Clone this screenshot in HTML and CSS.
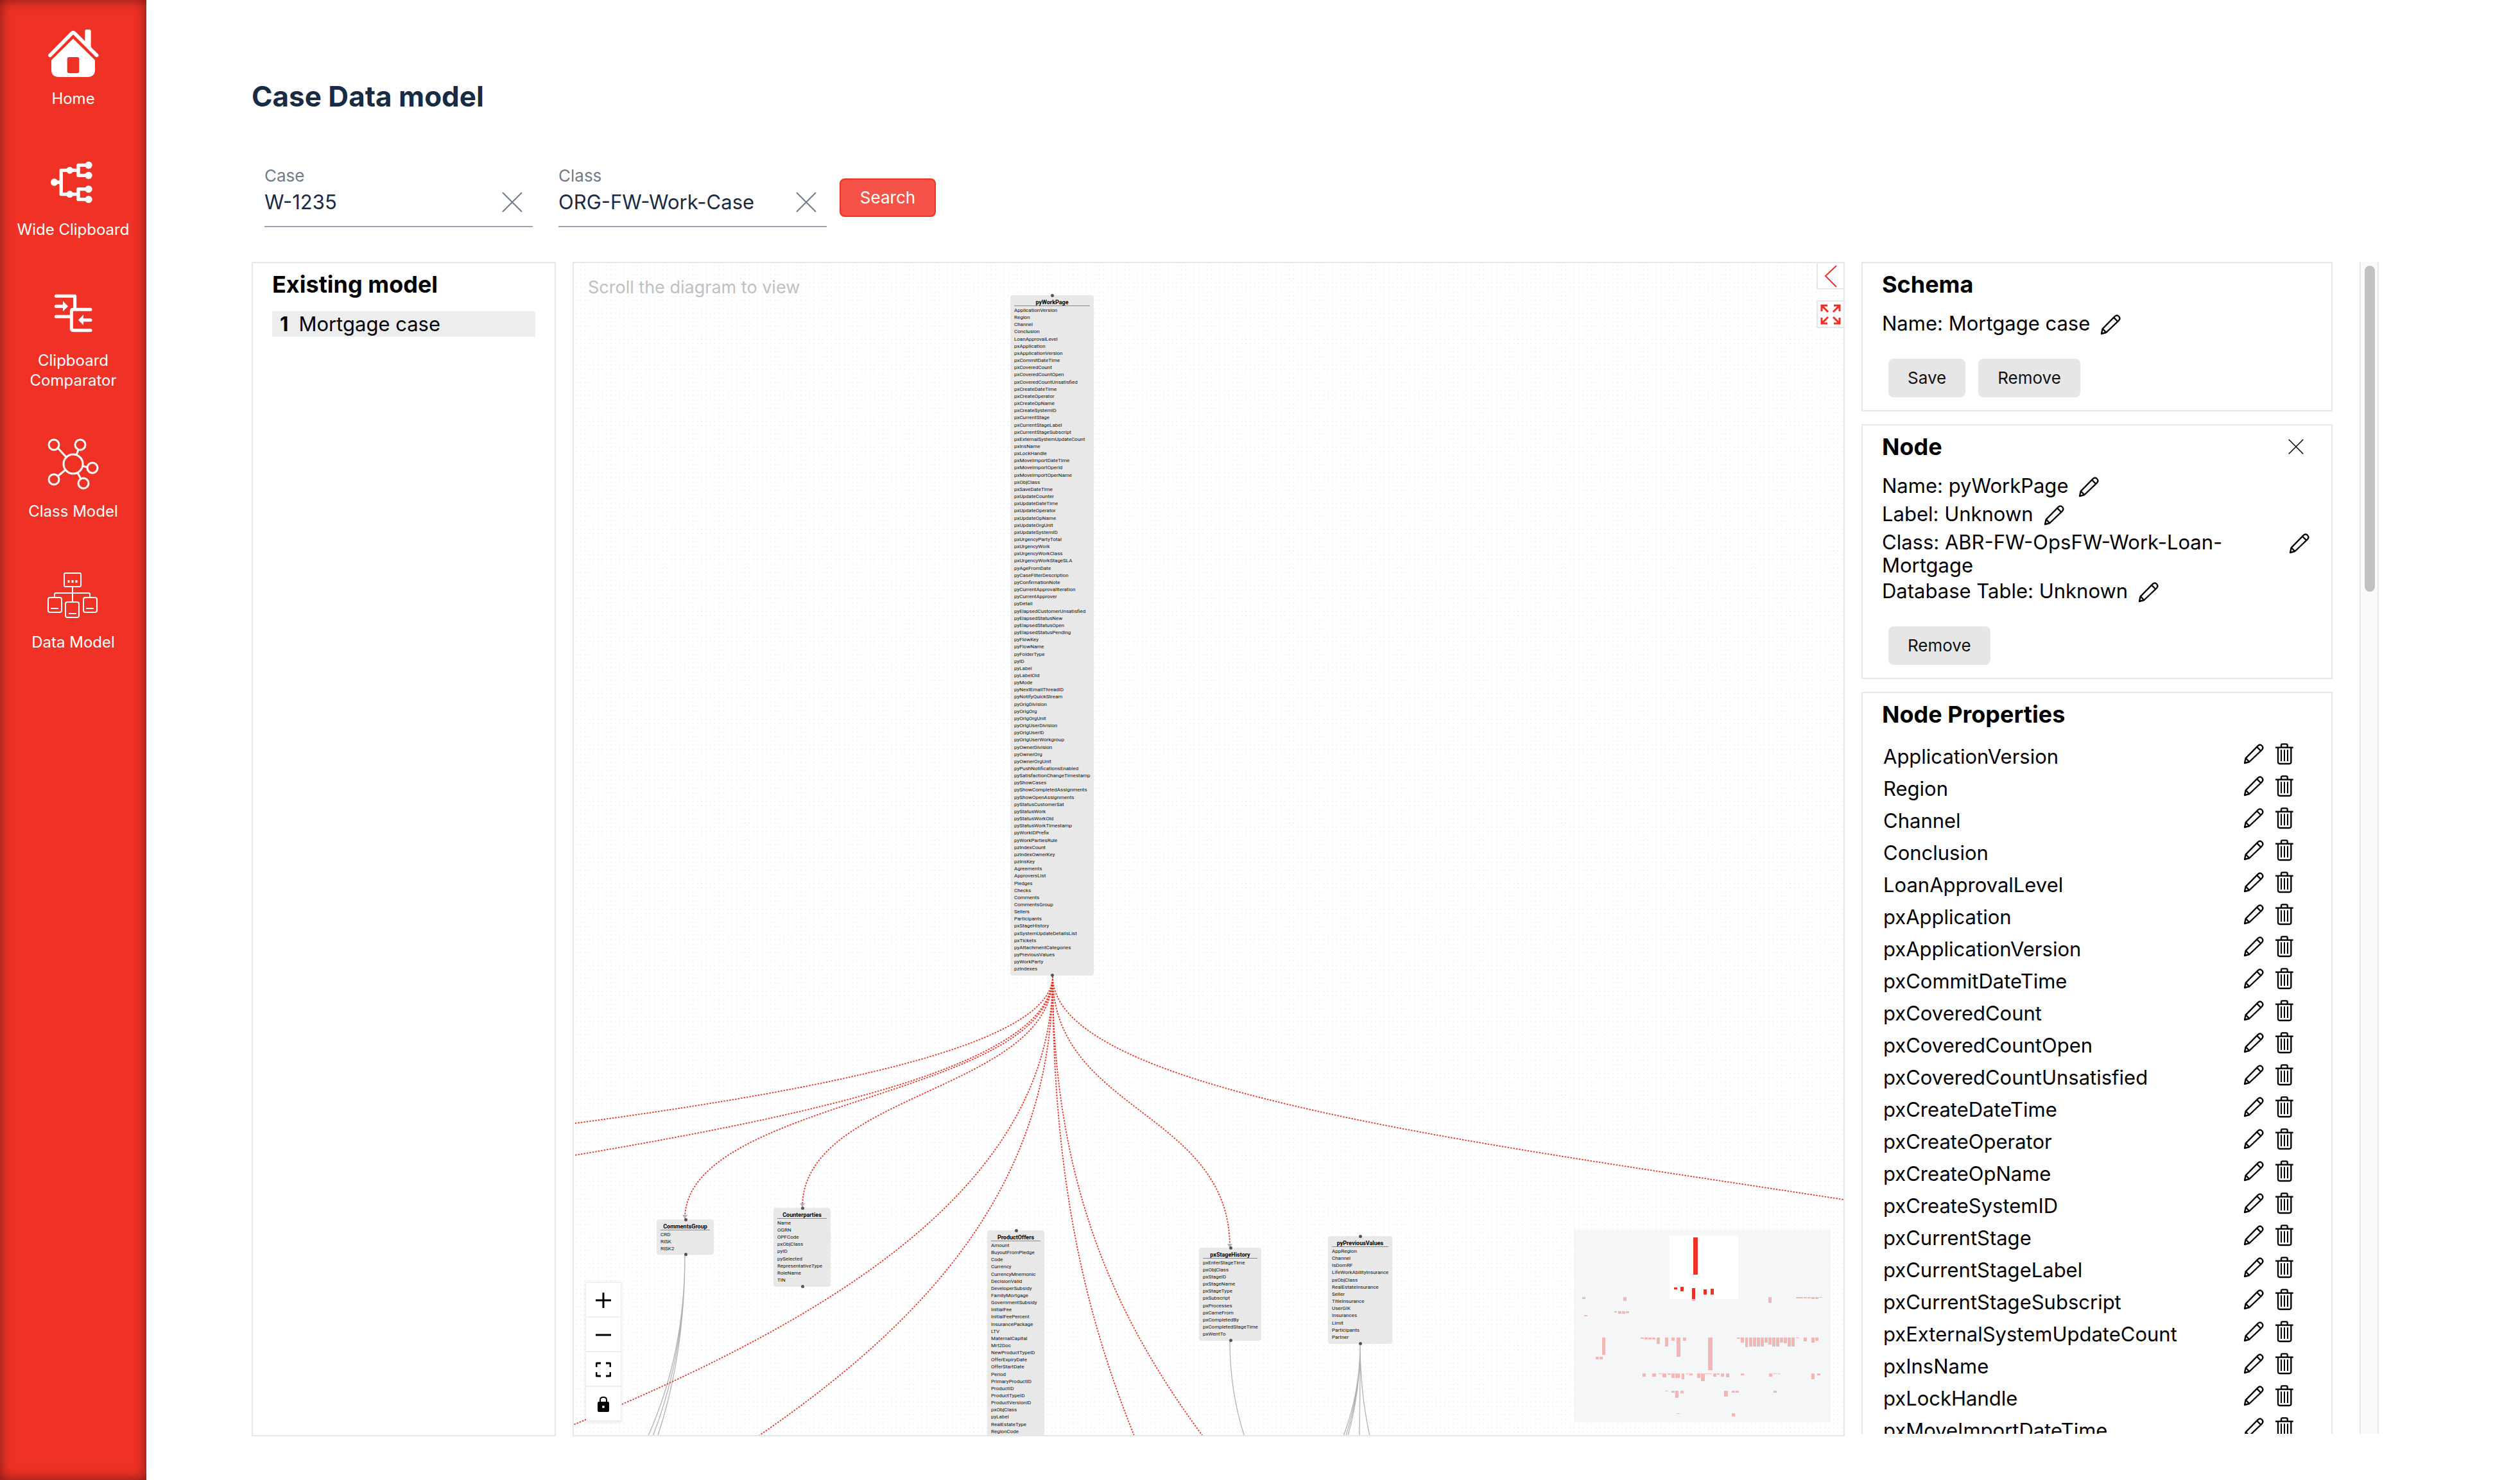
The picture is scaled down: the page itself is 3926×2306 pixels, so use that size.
FILE: index.html
```html
<!DOCTYPE html>
<html lang="en">
<head>
<meta charset="utf-8">
<title>Case Data model</title>
<link rel="stylesheet" href="styles.css">
</head>
<body>
<svg class="sprite" aria-hidden="true">
  <symbol id="pencil" viewBox="42 54 96 96"><g fill="none" stroke="#000" stroke-width="7" stroke-linejoin="round"><path d="M48 144 53 121 109 64Q120 54 129 63 138 73 128 83L70 138Z"/><path d="M105 68 124 87M54 122 70 138"/></g></symbol>
  <symbol id="trash" viewBox="189 48 96 102"><g fill="none" stroke="#000" stroke-width="7"><path d="M195 68H278"/><path d="M222 68V58Q222 52 228 52H245Q251 52 251 58V68"/><path d="M207 68V136Q207 144 215 144H260Q268 144 268 136V68"/><path d="M222 79V132M237 79V132M252 79V132" stroke-width="6"/></g></symbol>
  <symbol id="cross" viewBox="0 0 32 32"><path d="M1 1 31 31M31 1 1 31" fill="none" stroke="currentColor" stroke-width="2"/></symbol>
</svg>
<div class="app">
  <nav class="sidebar">
    <a class="nav-item" href="#"><svg class="nav-icon" viewBox="72 30 240 240"><path d="M192 91 294 191V240Q292 268 264 270H120Q92 268 90 240V191ZM172 177Q164 177 164 186V243Q164 252 173 252H211Q220 252 220 243V186Q220 177 211 177Z" fill="#fff" fill-rule="evenodd"/><path d="M84 169 186 65Q192 59 198 65L302 169" fill="none" stroke="#fff" stroke-width="17" stroke-linecap="round"/><path d="M247 104V56Q247 48 255 48H267Q275 48 275 56V134Z" fill="#fff"/></svg><span>Home</span></a>
    <a class="nav-item" href="#"><svg class="nav-icon" viewBox="72 642 240 240"><g fill="none" stroke="#fff" stroke-width="16" stroke-linejoin="round"><path d="M104 762H136M216 706H136V818H216M264 682H216V730H264M264 794H216V842H264"/></g><g fill="#fff"><circle cx="104" cy="762" r="17"/><circle cx="176" cy="706" r="16"/><circle cx="176" cy="818" r="16"/><circle cx="264" cy="682" r="17"/><circle cx="264" cy="730" r="17"/><circle cx="264" cy="794" r="17"/><circle cx="264" cy="842" r="17"/></g></svg><span>Wide Clipboard</span></a>
    <a class="nav-item" href="#"><svg class="nav-icon" viewBox="72 1254 240 240"><g fill="none" stroke="#fff" stroke-width="15" stroke-linecap="round" stroke-linejoin="round"><path d="M112 1294H200V1357M112 1342H146M112 1390H184M273 1357H192Q184 1357 184 1365V1446Q184 1454 192 1454H273M273 1406H238"/></g><path d="M144 1317 168 1342 144 1366ZM240 1381 216 1406 240 1430Z" fill="#fff"/></svg><span>Clipboard Comparator</span></a>
    <a class="nav-item" href="#"><svg class="nav-icon" viewBox="74 684 80 80"><g fill="none" stroke="#fff" stroke-width="3"><circle cx="84" cy="694" r="8"/><circle cx="125" cy="694" r="8"/><circle cx="114" cy="724" r="15"/><circle cx="144" cy="730" r="8"/><circle cx="84" cy="748" r="8"/><circle cx="130" cy="754" r="8"/><path d="M90 699 103 713M122 702 119 710M128 727 136 729M90 743 102 733M121 738 126 747"/></g></svg><span>Class Model</span></a>
    <a class="nav-item" href="#"><svg class="nav-icon" viewBox="74 888 80 80"><g fill="none" stroke="#fff" stroke-width="2"><rect x="100" y="894" width="26" height="21" rx="2"/><rect x="75" y="932" width="21" height="23" rx="3"/><rect x="102" y="939" width="21" height="24" rx="3"/><rect x="130" y="932" width="21" height="23" rx="3"/><path d="M113 915V939M85 932V927Q85 925 87 925H138Q140 925 140 927V932M79 949H91M107 957H119M134 949H146"/><path d="M107 905V909M113 905V909M119 905V909" stroke-width="3"/></g></svg><span>Data Model</span></a>
  </nav>
  <main class="main">
    <h1 class="page-title">Case Data model</h1>
    <form class="search">
      <div class="field">
        <label for="case">Case</label>
        <div class="field-box"><input id="case" type="text" value="W-1235"><button type="button" class="clear" aria-label="Clear case"><svg><use href="#cross"/></svg></button></div>
      </div>
      <div class="field">
        <label for="class">Class</label>
        <div class="field-box"><input id="class" type="text" value="ORG-FW-Work-Case"><button type="button" class="clear" aria-label="Clear class"><svg><use href="#cross"/></svg></button></div>
      </div>
      <button type="button" class="primary">Search</button>
    </form>
    <div class="workspace">
      <section class="panel models">
        <h2>Existing model</h2>
        <ol class="model-list"><li><b>1</b><span>Mortgage case</span></li></ol>
      </section>
      <section class="canvas">
        <svg class="layer">
          <defs><pattern id="dots" width="6.73" height="6.73" patternUnits="userSpaceOnUse"><circle cx="4" cy="4" r=".6" fill="#d4d4d4"/></pattern></defs>
          <rect width="100%" height="100%" fill="url(#dots)"/>
          <g transform="translate(-894 -410)" fill="none">
            <g stroke="#b1b1b7" stroke-width="1.3">
              <path d="M1067 1955C1067 2646 220 2646 220 3337M1067 1955C1067 2646 330 2646 330 3337M1067 1955C1067 2646 441 2646 441 3337"/>
              <path d="M1916 2089C1916 2713 2984 2713 2984 3337"/>
              <path d="M2119 2094C2119 2715 807 2715 807 3337M2119 2094C2119 2715 991 2715 991 3337M2119 2094C2119 2715 1151 2715 1151 3337M2119 2094C2119 2715 2065 2715 2065 3337M2119 2094C2119 2715 2876 2715 2876 3337"/>
            </g>
            <g stroke="#ee3124" stroke-width="1.8" stroke-dasharray="2.5 2">
              <path d="M1640 1521C1640 1846-1573 1846-1573 2172"/>
              <path d="M1640 1521C1640 1844-392 1844-392 2168"/>
              <path d="M1640 1521C1640 1710 1067 1710 1067 1899"/>
              <path d="M1640 1521C1640 1701 1250 1701 1250 1881"/>
              <path d="M1640 1521C1640 2429-998 2429-998 3337"/>
              <path d="M1640 1521C1640 2429 109 2429 109 3337"/>
              <path d="M1640 1521C1640 2429 2065 2429 2065 3337"/>
              <path d="M1640 1521C1640 2429 2421 2429 2421 3337"/>
              <path d="M1640 1521C1640 1732 1916 1732 1916 1943"/>
              <path d="M1640 1521C1640 1844 3777 1844 3777 2168"/>
            </g>
            <path d="M1063 1893H1071L1067 1899ZM1246 1875H1254L1250 1881ZM1912 1938H1920L1916 1944Z" fill="#b1b1b7"/>
          </g>
        </svg>
        <p class="hint">Scroll the diagram to view</p>
        <article class="node node-work"><h3>pyWorkPage</h3><ul><li>ApplicationVersion</li><li>Region</li><li>Channel</li><li>Conclusion</li><li>LoanApprovalLevel</li><li>pxApplication</li><li>pxApplicationVersion</li><li>pxCommitDateTime</li><li>pxCoveredCount</li><li>pxCoveredCountOpen</li><li>pxCoveredCountUnsatisfied</li><li>pxCreateDateTime</li><li>pxCreateOperator</li><li>pxCreateOpName</li><li>pxCreateSystemID</li><li>pxCurrentStage</li><li>pxCurrentStageLabel</li><li>pxCurrentStageSubscript</li><li>pxExternalSystemUpdateCount</li><li>pxInsName</li><li>pxLockHandle</li><li>pxMoveImportDateTime</li><li>pxMoveImportOperId</li><li>pxMoveImportOperName</li><li>pxObjClass</li><li>pxSaveDateTime</li><li>pxUpdateCounter</li><li>pxUpdateDateTime</li><li>pxUpdateOperator</li><li>pxUpdateOpName</li><li>pxUpdateOrgUnit</li><li>pxUpdateSystemID</li><li>pxUrgencyPartyTotal</li><li>pxUrgencyWork</li><li>pxUrgencyWorkClass</li><li>pxUrgencyWorkStageSLA</li><li>pyAgeFromDate</li><li>pyCaseFilterDescription</li><li>pyConfirmationNote</li><li>pyCurrentApprovalIteration</li><li>pyCurrentApprover</li><li>pyDetail</li><li>pyElapsedCustomerUnsatisfied</li><li>pyElapsedStatusNew</li><li>pyElapsedStatusOpen</li><li>pyElapsedStatusPending</li><li>pyFlowKey</li><li>pyFlowName</li><li>pyFolderType</li><li>pyID</li><li>pyLabel</li><li>pyLabelOld</li><li>pyMode</li><li>pyNextEmailThreadID</li><li>pyNotifyQuickStream</li><li>pyOrigDivision</li><li>pyOrigOrg</li><li>pyOrigOrgUnit</li><li>pyOrigUserDivision</li><li>pyOrigUserID</li><li>pyOrigUserWorkgroup</li><li>pyOwnerDivision</li><li>pyOwnerOrg</li><li>pyOwnerOrgUnit</li><li>pyPushNotificationsEnabled</li><li>pySatisfactionChangeTimestamp</li><li>pyShowCases</li><li>pyShowCompletedAssignments</li><li>pyShowOpenAssignments</li><li>pyStatusCustomerSat</li><li>pyStatusWork</li><li>pyStatusWorkOld</li><li>pyStatusWorkTimestamp</li><li>pyWorkIDPrefix</li><li>pyWorkPartiesRule</li><li>pzIndexCount</li><li>pzIndexOwnerKey</li><li>pzInsKey</li><li>Agreements</li><li>ApproversList</li><li>Pledges</li><li>Checks</li><li>Comments</li><li>CommentsGroup</li><li>Sellers</li><li>Participants</li><li>pxStageHistory</li><li>pxSystemUpdateDetailsList</li><li>pxTickets</li><li>pyAttachmentCategories</li><li>pyPreviousValues</li><li>pyWorkParty</li><li>pzIndexes</li></ul></article>
        <article class="node node-comments"><h3>CommentsGroup</h3><ul><li>CRD</li><li>RISK</li><li>RISK2</li></ul></article>
        <article class="node node-parties"><h3>Counterparties</h3><ul><li>Name</li><li>OGRN</li><li>OPFCode</li><li>pxObjClass</li><li>pyID</li><li>pySelected</li><li>RepresentativeType</li><li>RoleName</li><li>TIN</li></ul></article>
        <article class="node node-offers"><h3>ProductOffers</h3><ul><li>Amount</li><li>BuyoutFromPledge</li><li>Code</li><li>Currency</li><li>CurrencyMnemonic</li><li>DecisionValid</li><li>DeveloperSubsidy</li><li>FamilyMortgage</li><li>GovernmentSubsidy</li><li>InitialFee</li><li>InitialFeePercent</li><li>InsurancePackage</li><li>LTV</li><li>MaternalCapital</li><li>Mrt2Doc</li><li>NewProductTypeID</li><li>OfferExpiryDate</li><li>OfferStartDate</li><li>Period</li><li>PrimaryProductID</li><li>ProductID</li><li>ProductTypeID</li><li>ProductVersionID</li><li>pxObjClass</li><li>pyLabel</li><li>RealEstateType</li><li>RegionCode</li></ul></article>
        <article class="node node-stage"><h3>pxStageHistory</h3><ul><li>pxEnterStageTime</li><li>pxObjClass</li><li>pxStageID</li><li>pxStageName</li><li>pxStageType</li><li>pxSubscript</li><li>pxProcesses</li><li>pxCameFrom</li><li>pxCompletedBy</li><li>pxCompletedStageTime</li><li>pxWentTo</li></ul></article>
        <article class="node node-previous"><h3>pyPreviousValues</h3><ul><li>AppRegion</li><li>Channel</li><li>IsDomRF</li><li>LifeWorkAbilityInsurance</li><li>pxObjClass</li><li>RealEstateInsurance</li><li>Seller</li><li>TitleInsurance</li><li>UserGIK</li><li>Insurances</li><li>Limit</li><li>Participants</li><li>Partner</li></ul></article>
        <div class="toggles">
          <button type="button" aria-label="Collapse"><svg viewBox="0 0 40 40"><path d="M29 4 12 20 29 37" fill="none" stroke="#ee3124" stroke-width="2"/></svg></button>
          <button type="button" aria-label="Full screen"><svg viewBox="0 0 40 40"><g fill="none" stroke="#ee3124" stroke-width="3"><path d="M6 15V6H15M6 6 16 16M25 6H34V15M34 6 24 16M6 25V34H15M6 34 16 24M25 34H34V25M34 34 24 24"/></g></svg></button>
        </div>
        <div class="zoom">
          <button type="button" aria-label="Zoom in"><svg viewBox="0 0 24 24"><path d="M12 0V24M0 12H24" stroke="#000" stroke-width="3"/></svg></button>
          <button type="button" aria-label="Zoom out"><svg viewBox="0 0 24 24"><path d="M0 12H24" stroke="#000" stroke-width="3"/></svg></button>
          <button type="button" aria-label="Fit view"><svg viewBox="0 0 24 24"><path d="M1 8V3Q1 2 2 2H8M16 2H22Q23 2 23 3V8M23 16V21Q23 22 22 22H16M8 22H2Q1 22 1 21V16" fill="none" stroke="#000" stroke-width="3"/></svg></button>
          <button type="button" aria-label="Lock"><svg viewBox="0 0 24 24"><path d="M7 10V5Q7 1 12 1T17 5V10" fill="none" stroke="#000" stroke-width="2"/><path d="M5 8H19Q21 8 21 10V22Q21 24 19 24H5Q3 24 3 22V10Q3 8 5 8ZM12 14A2 2 0 1 0 12 18 2 2 0 1 0 12 14Z" fill-rule="evenodd"/></svg></button>
        </div>
        <svg class="minimap" viewBox="96 108 1200 900">
          <path d="M96 108H1296V1008H96Z" fill="#f4f6f8"/><path d="M543 136H864V433H543Z" fill="#fff"/>
          <path d="M654 144h21v174h-21zM564 378h15v9h-15zM594 375h15v21h-15zM648 381h15v52h-15zM702 387h15v24h-15zM735 384h15v27h-15z" fill="#ee3124"/>
          <path d="M648 433h15v8h-15zM135 423h15v9h-15zM327 423h15v18h-15zM1005 423h15v27h-15zM1134 423h33v6h-33zM1170 423h15v6h-15zM1188 423h15v6h-15zM1206 423h15v9h-15zM1224 423h15v9h-15zM1242 423h15v3h-15zM285 489h12v6h-12zM303 489h15v12h-15zM321 489h15v12h-15zM339 489h15v9h-15zM144 507h15v6h-15zM228 612h15v81h-15zM198 702h15v12h-15zM216 702h15v12h-15zM408 612h15v6h-15zM426 612h15v9h-15zM444 612h15v9h-15zM462 612h15v9h-15zM483 612h15v30h-15zM522 612h15v42h-15zM552 612h15v15h-15zM576 612h18v90h-18zM606 612h15v15h-15zM723 612h21v153h-21zM858 612h15v6h-15zM876 612h15v24h-15zM897 612h12v45h-12zM915 612h15v42h-15zM933 612h15v42h-15zM951 612h15v42h-15zM969 612h15v42h-15zM987 612h15v24h-15zM1005 612h15v33h-15zM1023 612h15v42h-15zM1041 612h15v42h-15zM1059 612h15v24h-15zM1077 612h15v27h-15zM1095 612h15v42h-15zM1113 612h15v42h-15zM1134 612h15v3h-15zM1170 612h15v18h-15zM1206 612h15v24h-15zM1224 612h15v15h-15zM417 780h15v15h-15zM462 780h18v15h-18zM492 780h15v3h-15zM510 780h18v18h-18zM534 780h15v6h-15zM552 780h15v21h-15zM570 780h21v21h-21zM600 780h12v27h-12zM618 780h15v3h-15zM636 780h15v9h-15zM672 780h15v21h-15zM690 780h18v36h-18zM708 780h15v3h-15zM726 780h15v3h-15zM747 780h15v15h-15zM765 780h12v6h-12zM783 780h15v15h-15zM807 780h15v18h-15zM876 780h15v9h-15zM1008 780h15v15h-15zM1029 780h15v3h-15zM1047 780h15v3h-15zM1206 780h15v27h-15zM1233 780h15v9h-15zM522 861h15v3h-15zM552 861h15v9h-15zM570 861h15v33h-15zM594 861h15v12h-15zM798 861h18v27h-18zM834 861h15v9h-15zM852 861h15v9h-15zM1029 861h15v9h-15zM576 966h15v3h-15zM834 966h15v15h-15z" fill="#f0b7b4"/>
        </svg>
      </section>
      <aside class="side">
        <div class="side-scroll">
          <section class="panel">
            <h2>Schema</h2>
            <div class="row"><span>Name: Mortgage case</span><button type="button" class="icon" aria-label="Edit name"><svg><use href="#pencil"/></svg></button></div>
            <div class="actions"><button type="button" class="plain">Save</button><button type="button" class="plain">Remove</button></div>
          </section>
          <section class="panel">
            <div class="panel-head"><h2>Node</h2><button type="button" class="close" aria-label="Close"><svg><use href="#cross"/></svg></button></div>
            <div class="row"><span>Name: pyWorkPage</span><button type="button" class="icon" aria-label="Edit name"><svg><use href="#pencil"/></svg></button></div>
            <div class="row"><span>Label: Unknown</span><button type="button" class="icon" aria-label="Edit label"><svg><use href="#pencil"/></svg></button></div>
            <div class="row"><span>Class: ABR-FW-OpsFW-Work-Loan-Mortgage</span><button type="button" class="icon" aria-label="Edit class"><svg><use href="#pencil"/></svg></button></div>
            <div class="row"><span>Database Table: Unknown</span><button type="button" class="icon" aria-label="Edit table"><svg><use href="#pencil"/></svg></button></div>
            <div class="actions"><button type="button" class="plain">Remove</button></div>
          </section>
          <section class="panel">
            <h2>Node Properties</h2>
            <ul class="props">
              <li><span>ApplicationVersion</span><button type="button" aria-label="Edit"><svg><use href="#pencil"/></svg></button><button type="button" aria-label="Delete"><svg><use href="#trash"/></svg></button></li>
              <li><span>Region</span><button type="button" aria-label="Edit"><svg><use href="#pencil"/></svg></button><button type="button" aria-label="Delete"><svg><use href="#trash"/></svg></button></li>
              <li><span>Channel</span><button type="button" aria-label="Edit"><svg><use href="#pencil"/></svg></button><button type="button" aria-label="Delete"><svg><use href="#trash"/></svg></button></li>
              <li><span>Conclusion</span><button type="button" aria-label="Edit"><svg><use href="#pencil"/></svg></button><button type="button" aria-label="Delete"><svg><use href="#trash"/></svg></button></li>
              <li><span>LoanApprovalLevel</span><button type="button" aria-label="Edit"><svg><use href="#pencil"/></svg></button><button type="button" aria-label="Delete"><svg><use href="#trash"/></svg></button></li>
              <li><span>pxApplication</span><button type="button" aria-label="Edit"><svg><use href="#pencil"/></svg></button><button type="button" aria-label="Delete"><svg><use href="#trash"/></svg></button></li>
              <li><span>pxApplicationVersion</span><button type="button" aria-label="Edit"><svg><use href="#pencil"/></svg></button><button type="button" aria-label="Delete"><svg><use href="#trash"/></svg></button></li>
              <li><span>pxCommitDateTime</span><button type="button" aria-label="Edit"><svg><use href="#pencil"/></svg></button><button type="button" aria-label="Delete"><svg><use href="#trash"/></svg></button></li>
              <li><span>pxCoveredCount</span><button type="button" aria-label="Edit"><svg><use href="#pencil"/></svg></button><button type="button" aria-label="Delete"><svg><use href="#trash"/></svg></button></li>
              <li><span>pxCoveredCountOpen</span><button type="button" aria-label="Edit"><svg><use href="#pencil"/></svg></button><button type="button" aria-label="Delete"><svg><use href="#trash"/></svg></button></li>
              <li><span>pxCoveredCountUnsatisfied</span><button type="button" aria-label="Edit"><svg><use href="#pencil"/></svg></button><button type="button" aria-label="Delete"><svg><use href="#trash"/></svg></button></li>
              <li><span>pxCreateDateTime</span><button type="button" aria-label="Edit"><svg><use href="#pencil"/></svg></button><button type="button" aria-label="Delete"><svg><use href="#trash"/></svg></button></li>
              <li><span>pxCreateOperator</span><button type="button" aria-label="Edit"><svg><use href="#pencil"/></svg></button><button type="button" aria-label="Delete"><svg><use href="#trash"/></svg></button></li>
              <li><span>pxCreateOpName</span><button type="button" aria-label="Edit"><svg><use href="#pencil"/></svg></button><button type="button" aria-label="Delete"><svg><use href="#trash"/></svg></button></li>
              <li><span>pxCreateSystemID</span><button type="button" aria-label="Edit"><svg><use href="#pencil"/></svg></button><button type="button" aria-label="Delete"><svg><use href="#trash"/></svg></button></li>
              <li><span>pxCurrentStage</span><button type="button" aria-label="Edit"><svg><use href="#pencil"/></svg></button><button type="button" aria-label="Delete"><svg><use href="#trash"/></svg></button></li>
              <li><span>pxCurrentStageLabel</span><button type="button" aria-label="Edit"><svg><use href="#pencil"/></svg></button><button type="button" aria-label="Delete"><svg><use href="#trash"/></svg></button></li>
              <li><span>pxCurrentStageSubscript</span><button type="button" aria-label="Edit"><svg><use href="#pencil"/></svg></button><button type="button" aria-label="Delete"><svg><use href="#trash"/></svg></button></li>
              <li><span>pxExternalSystemUpdateCount</span><button type="button" aria-label="Edit"><svg><use href="#pencil"/></svg></button><button type="button" aria-label="Delete"><svg><use href="#trash"/></svg></button></li>
              <li><span>pxInsName</span><button type="button" aria-label="Edit"><svg><use href="#pencil"/></svg></button><button type="button" aria-label="Delete"><svg><use href="#trash"/></svg></button></li>
              <li><span>pxLockHandle</span><button type="button" aria-label="Edit"><svg><use href="#pencil"/></svg></button><button type="button" aria-label="Delete"><svg><use href="#trash"/></svg></button></li>
              <li><span>pxMoveImportDateTime</span><button type="button" aria-label="Edit"><svg><use href="#pencil"/></svg></button><button type="button" aria-label="Delete"><svg><use href="#trash"/></svg></button></li>
            </ul>
          </section>
        </div>
        <div class="scrollbar"><div class="thumb"></div></div>
      </aside>
    </div>
  </main>
</div>
</body>
</html>
```

FILE: styles.css
```css
* { box-sizing: border-box; }
body { margin: 0; background: #fff; color: #000; font: 31px/36px Inter, "Liberation Sans", sans-serif; }
h1, h2, h3, p, ul, ol { margin: 0; padding: 0; }
ul, ol { list-style: none; }
button { margin: 0; padding: 0; border: 0; background: none; color: inherit; font: inherit; cursor: pointer; }
svg { display: block; }
.sprite { position: absolute; width: 0; height: 0; }

.app { display: flex; height: 100vh; }

/* Sidebar */
.sidebar { flex: none; width: 228px; padding: 40px 20px; display: flex; flex-direction: column; gap: 75px; background: #f03226; box-shadow: inset 0 0 20px rgba(0, 0, 0, .5); }
.nav-item { display: flex; flex-direction: column; align-items: center; gap: 18px; color: #fff; font-size: 24px; line-height: 31px; text-align: center; text-decoration: none; }
.nav-item span { margin: 0 -10px; }
.nav-icon { width: 80px; height: 80px; }

/* Header and search */
.main { flex: 1; min-width: 0; display: flex; flex-direction: column; padding: 122px 220px 68px 164px; }
.page-title { color: #182b45; font-size: 44px; line-height: 56px; }
.search { display: flex; gap: 40px; margin-top: 80px; padding-left: 20px; }
.field { width: 418px; }
.field label { display: block; color: #6f7b8c; font-size: 26px; line-height: 32px; }
.field-box { display: flex; height: 64px; padding: 0 16px 12px 0; border-bottom: 2px solid #9aa3af; }
.field-box input { flex: 1; min-width: 0; padding: 0; border: 0; outline: 0; background: none; color: #182b45; font: inherit; }
.clear { color: #6f7b8c; }
.clear svg { width: 32px; height: 32px; }
.primary { width: 150px; height: 60px; margin: 20px 0 0 -20px; border: 2px solid #ee3124; border-radius: 8px; background: #f55347; color: #fff; font-size: 26px; }

/* Workspace */
.workspace { flex: 1; min-height: 0; display: flex; gap: 26px; margin-top: 54px; }
.panel { border: 2px solid #e6e7e8; padding: 11px 30px 20px; background: #fff; }
.panel h2 { font-size: 36px; line-height: 44px; }
.models { flex: none; width: 474px; }
.model-list { margin-top: 20px; }
.model-list li { display: flex; gap: 16px; height: 40px; padding-left: 12px; background: #ecedef; line-height: 40px; }

/* Diagram */
.canvas { flex: 1; min-width: 0; position: relative; overflow: hidden; border: 2px solid #e6e7e8; }
.layer { position: absolute; top: 0; left: 0; width: 100%; height: 100%; }
.hint { position: relative; padding: 20px 22px; color: #c0c0c0; font-size: 27px; }
.node { position: absolute; display: flex; flex-direction: column; padding: 6px 6px 5px; border-radius: 4px; background: #e8e8e8; color: #111; font: 8px/11px Roboto, "Liberation Sans", sans-serif; white-space: nowrap; }
.node h3 { margin-bottom: 1px; border-bottom: 1px solid #888; color: #000; font-size: 9px; line-height: 10px; text-align: center; }
.node ul { flex: 1; display: flex; flex-direction: column; }
.node li { flex: 1; }
.node::before, .node::after { content: ""; position: absolute; left: 50%; width: 5px; height: 5px; margin-left: -2px; border-radius: 50%; background: #555; }
.node::before { top: -2px; }
.node::after { bottom: -2px; }
.node-work { left: 680px; top: 50px; width: 130px; height: 1060px; }
.node-comments { left: 129px; top: 1490px; width: 89px; height: 55px; }
.node-parties { left: 311px; top: 1472px; width: 89px; height: 123px; }
.node-offers { left: 644px; top: 1507px; width: 89px; height: 324px; }
.node-stage { left: 974px; top: 1534px; width: 97px; height: 145px; }
.node-previous { left: 1175px; top: 1516px; width: 100px; height: 168px; }
.toggles { position: absolute; top: -2px; right: 0; display: flex; flex-direction: column; gap: 17px; }
.toggles button { width: 42px; height: 43px; border: 2px solid #e6e7e8; border-right: 0; background: #fff; }
.toggles svg { width: 40px; height: 40px; }
.zoom { position: absolute; left: 19px; bottom: 21px; display: flex; flex-direction: column; background: #fff; box-shadow: 0 0 4px 2px rgba(0, 0, 0, .08); }
.zoom button { width: 54px; height: 54px; padding: 15px; border-bottom: 2px solid #eee; }
.zoom svg { width: 24px; height: 24px; }
.minimap { position: absolute; right: 20px; bottom: 20px; width: 400px; height: 300px; }

/* Details */
.side { flex: none; width: 806px; display: flex; justify-content: space-between; padding-bottom: 4px; }
.side-scroll { width: 734px; display: flex; flex-direction: column; gap: 20px; overflow: hidden; }
.side-scroll .panel { flex: none; }
.panel-head { display: flex; justify-content: space-between; align-items: center; padding-right: 13px; }
.close svg { width: 24px; height: 24px; }
.row { display: flex; align-items: flex-start; gap: 16px; margin-bottom: 4px; padding-right: 4px; }
.panel h2 + .row, .panel-head + .row { margin-top: 21px; }
.icon { padding: 4px 0; }
.icon svg { width: 32px; height: 32px; }
.actions { display: flex; gap: 20px; margin-top: 33px; padding-left: 10px; }
.plain { height: 60px; padding: 0 30px; border-radius: 8px; background: #e6e6e6; color: #111; font-size: 26px; }
.props { margin-top: 15px; padding: 0 27px 0 2px; }
.props li { display: flex; align-items: center; gap: 16px; height: 50px; }
.props span { flex: 1; padding-top: 8px; }
.props svg { width: 32px; height: 34px; }
.scrollbar { width: 30px; padding: 6px; border: solid #e8e8e8; border-width: 0 2px; background: #fafafa; }
.thumb { width: 16px; height: 508px; border-radius: 8px; background: #c1c1c1; }
```
